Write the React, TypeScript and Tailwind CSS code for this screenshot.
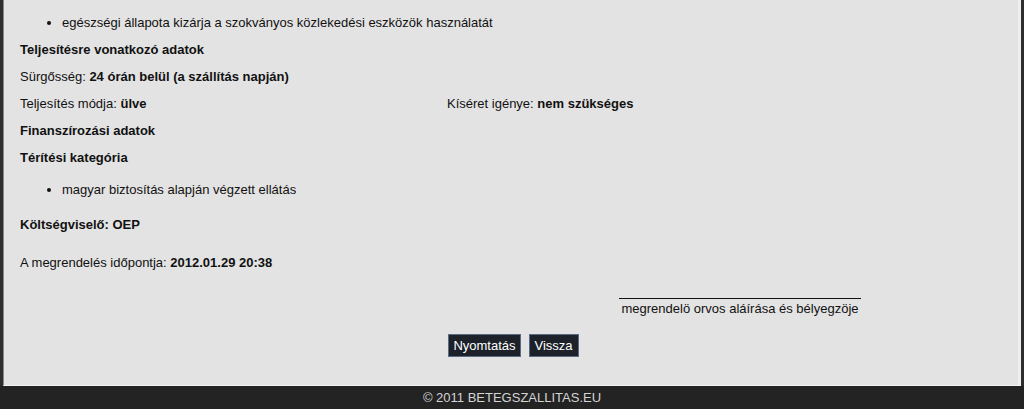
export default function App() {
  return (
    <div
      className="w-[1024px] h-[409px] overflow-hidden bg-[#2e2e2e] flex flex-col text-[13px] text-[#111]"
      style={{ fontFamily: '"Liberation Sans", Arial, sans-serif' }}
    >
      <div className="flex-1 flex pl-[3px] pr-[3px]">
        <div className="flex-1 bg-[#e3e3e3] border-l border-[#8a8a8a] border-r-[3px] border-r-[#eeeeee] border-b border-b-[#f2f2f2] pl-[16px] pt-[9px]">
          <ul className="list-disc pl-[42px] h-[27px] leading-[27px]">
            <li>egészségi állapota kizárja a szokványos közlekedési eszközök használatát</li>
          </ul>
          <div className="h-[27px] leading-[27px] font-bold">Teljesítésre vonatkozó adatok</div>
          <div className="h-[27px] leading-[27px]">
            Sürgősség: <b>24 órán belül (a szállítás napján)</b>
          </div>
          <div className="h-[27px] leading-[27px] grid grid-cols-[427px_1fr]">
            <div>
              Teljesítés módja: <b>ülve</b>
            </div>
            <div>
              Kíséret igénye: <b>nem szükséges</b>
            </div>
          </div>
          <div className="h-[27px] leading-[27px] font-bold">Finanszírozási adatok</div>
          <div className="h-[27px] leading-[27px] font-bold">Térítési kategória</div>
          <ul className="list-disc pl-[42px] mt-[5px] h-[27px] leading-[27px]">
            <li>magyar biztosítás alapján végzett ellátás</li>
          </ul>
          <div className="mt-[8px] h-[27px] leading-[27px] font-bold">Költségviselő: OEP</div>
          <div className="mt-[11px] h-[27px] leading-[27px]">
            A megrendelés időpontja: <b>2012.01.29 20:38</b>
          </div>
          <div className="mt-[22px] ml-[599px] w-[242px] border-t border-[#111] pt-[1px] text-center leading-[17px]">
            megrendelö orvos aláírása és bélyegzöje
          </div>
          <div className="mt-[17px] flex justify-center gap-[8px] pr-[11px]">
            <button className="h-[23px] px-[4px] bg-[#1d2129] border border-[#5a6b86] text-white leading-[21px]">
              Nyomtatás
            </button>
            <button className="h-[23px] px-[5px] bg-[#1d2129] border border-[#5a6b86] text-white leading-[21px]">
              Vissza
            </button>
          </div>
        </div>
      </div>
      <div className="h-[23px] bg-[#232323] text-[#d4d4d4] text-[13px] leading-[23px] text-center">
        © 2011 BETEGSZALLITAS.EU
      </div>
    </div>
  )
}
